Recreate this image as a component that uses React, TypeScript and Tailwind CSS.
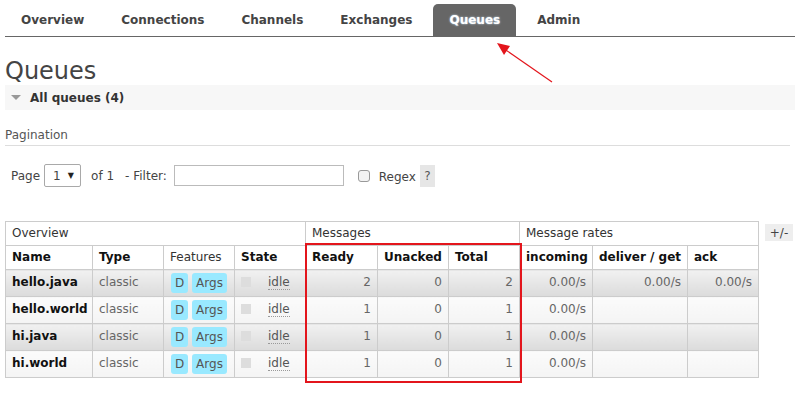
import React from "react";

const tabs = ["Overview", "Connections", "Channels", "Exchanges", "Queues", "Admin"];

const rows = [
  { name: "hello.java", ready: 2, unacked: 0, total: 2, inc: "0.00/s", del: "0.00/s", ack: "0.00/s" },
  { name: "hello.world", ready: 1, unacked: 0, total: 1, inc: "0.00/s", del: "", ack: "" },
  { name: "hi.java", ready: 1, unacked: 0, total: 1, inc: "0.00/s", del: "", ack: "" },
  { name: "hi.world", ready: 1, unacked: 0, total: 1, inc: "0.00/s", del: "", ack: "" },
];

export default function App() {
  return (
    <div
      className="relative w-[795px] h-[394px] overflow-hidden bg-white text-[12px] text-[#444]"
      style={{ fontFamily: '"DejaVu Sans", Verdana, sans-serif' }}
    >
      {/* nav */}
      <div className="ml-[5px] pt-[4px] flex gap-[5px] border-b border-[#666]">
        {tabs.map((t) => (
          <div
            key={t}
            className={
              t === "Queues"
                ? "h-[32px] px-[16px] flex items-center font-bold text-white bg-[#666] rounded-t-[5px] [text-shadow:0_0_2px_#cfe8ff]"
                : "h-[32px] px-[16px] flex items-center font-bold text-[#444]"
            }
          >
            {t}
          </div>
        ))}
      </div>

      {/* title */}
      <div className="mt-[21px] ml-[5px] text-[24px] leading-[27px] text-[#444]">Queues</div>

      {/* all queues bar */}
      <div className="ml-[5px] h-[25px] bg-[#f7f7f7] flex items-center">
        <svg width="10" height="6" viewBox="0 0 10 6" className="ml-[6px]">
          <polygon points="0,0 10,0 5,5" fill="#999" />
        </svg>
        <span className="ml-[9px] font-bold text-[#333]">All queues (4)</span>
      </div>

      {/* pagination heading */}
      <div className="mt-[18px] mx-[5px] leading-[15px] pb-[2px] border-b border-[#ddd] text-[#555]">
        Pagination
      </div>

      {/* pagination row */}
      <div className="mt-[18px] h-[23px] flex items-center text-[#444]">
        <span className="ml-[11px]">Page</span>
        <div className="ml-[4px] w-[37px] h-[23px] border border-[#a9a9a9] rounded-[2px] flex items-center bg-white">
          <span className="ml-[8px]">1</span>
          <span className="ml-[7px] text-[8px] text-[#222]">▼</span>
        </div>
        <span className="ml-[10px]">of 1</span>
        <span className="ml-[11px]">- Filter:</span>
        <div className="ml-[7px] w-[170px] h-[21px] border border-[#bbb] bg-white" />
        <div className="ml-[14px] w-[12px] h-[12px] rounded-[3px] border border-[#999] bg-[#f3f3f3]" />
        <span className="ml-[9px] mt-[2px]">Regex</span>
        <div className="ml-[4px] w-[15px] h-[22px] bg-[#e6e6e6] flex items-center justify-center text-[#555]">?</div>
      </div>

      {/* table */}
      <div className="mt-[34px] ml-[5px] flex items-start">
        <div className="relative">
          <table className="table-fixed border-collapse border border-[#ccc] w-[753px]">
            <colgroup>
              <col className="w-[87px]" />
              <col className="w-[71px]" />
              <col className="w-[71px]" />
              <col className="w-[71px]" />
              <col className="w-[72px]" />
              <col className="w-[71px]" />
              <col className="w-[71px]" />
              <col className="w-[73px]" />
              <col className="w-[95px]" />
              <col className="w-[71px]" />
            </colgroup>
            <thead>
              <tr className="h-[24px]">
                <th colSpan={4} className="border border-[#ccc] px-[6px] text-left font-normal text-[#333] leading-[15px]">
                  Overview
                </th>
                <th colSpan={3} className="border border-[#ccc] px-[6px] text-left font-normal text-[#333] leading-[15px]">
                  Messages
                </th>
                <th colSpan={3} className="border border-[#ccc] px-[6px] text-left font-normal text-[#333] leading-[15px]">
                  Message rates
                </th>
              </tr>
              <tr className="h-[24px]">
                {["Name", "Type", "Features", "State", "Ready", "Unacked", "Total", "incoming", "deliver / get", "ack"].map(
                  (h) => (
                    <th
                      key={h}
                      className={
                        "border border-[#ccc] px-[6px] text-left leading-[15px] whitespace-nowrap text-[#111] " +
                        (h === "Features" ? "font-normal text-[#333]" : "font-bold")
                      }
                    >
                      {h}
                    </th>
                  )
                )}
              </tr>
            </thead>
            <tbody>
              {rows.map((r, i) => {
                const bg =
                  i % 2 === 0
                    ? "bg-linear-to-b from-[#f1f1f1] to-[#dbdbdb]"
                    : "bg-linear-to-b from-[#fbfbfb] to-[#f4f4f4]";
                const td = "border border-[#ccc] px-[6px] h-[27px] align-top pt-[2px] leading-[20px] " + bg;
                const num = td + " text-right text-[#666]";
                return (
                  <tr key={r.name}>
                    <td className={td + " font-bold text-[#111] whitespace-nowrap"}>{r.name}</td>
                    <td className={td + " text-[#666]"}>classic</td>
                    <td className={td + " pl-[7px] pt-[3px]"}>
                      <div className="flex gap-[4px]">
                        <span className="h-[20px] w-[17px] rounded-[3px] bg-[#99e9ff] text-[#555] flex items-center justify-center">
                          D
                        </span>
                        <span className="h-[20px] w-[35px] rounded-[3px] bg-[#99e9ff] text-[#555] flex items-center justify-center">
                          Args
                        </span>
                      </div>
                    </td>
                    <td className={td}>
                      <div className="flex items-center h-[20px]">
                        <span className="w-[10px] h-[10px] bg-[#ddd]" />
                        <span className="ml-[17px] text-[#555] leading-[14px] border-b border-dotted border-[#999]">
                          idle
                        </span>
                      </div>
                    </td>
                    <td className={num}>{r.ready}</td>
                    <td className={num}>{r.unacked}</td>
                    <td className={num}>{r.total}</td>
                    <td className={num}>{r.inc}</td>
                    <td className={num}>{r.del}</td>
                    <td className={num}>{r.ack}</td>
                  </tr>
                );
              })}
            </tbody>
          </table>
          {/* red annotation box */}
          <div className="absolute left-[300px] top-[22px] w-[217px] h-[140px] border-2 border-[#e3151c] pointer-events-none" />
        </div>
        <div className="ml-[6px] mt-[3px] w-[28px] h-[17px] bg-[#eee] flex items-center justify-center text-[#444]">
          +/-
        </div>
      </div>

      {/* red arrow annotation */}
      <svg className="absolute left-0 top-0 pointer-events-none" width="795" height="394">
        <line x1="552" y1="82" x2="503" y2="48" stroke="#e3151c" strokeWidth="1.2" />
        <polygon points="497,43 510,46 504,55" fill="#e3151c" />
      </svg>
    </div>
  );
}
